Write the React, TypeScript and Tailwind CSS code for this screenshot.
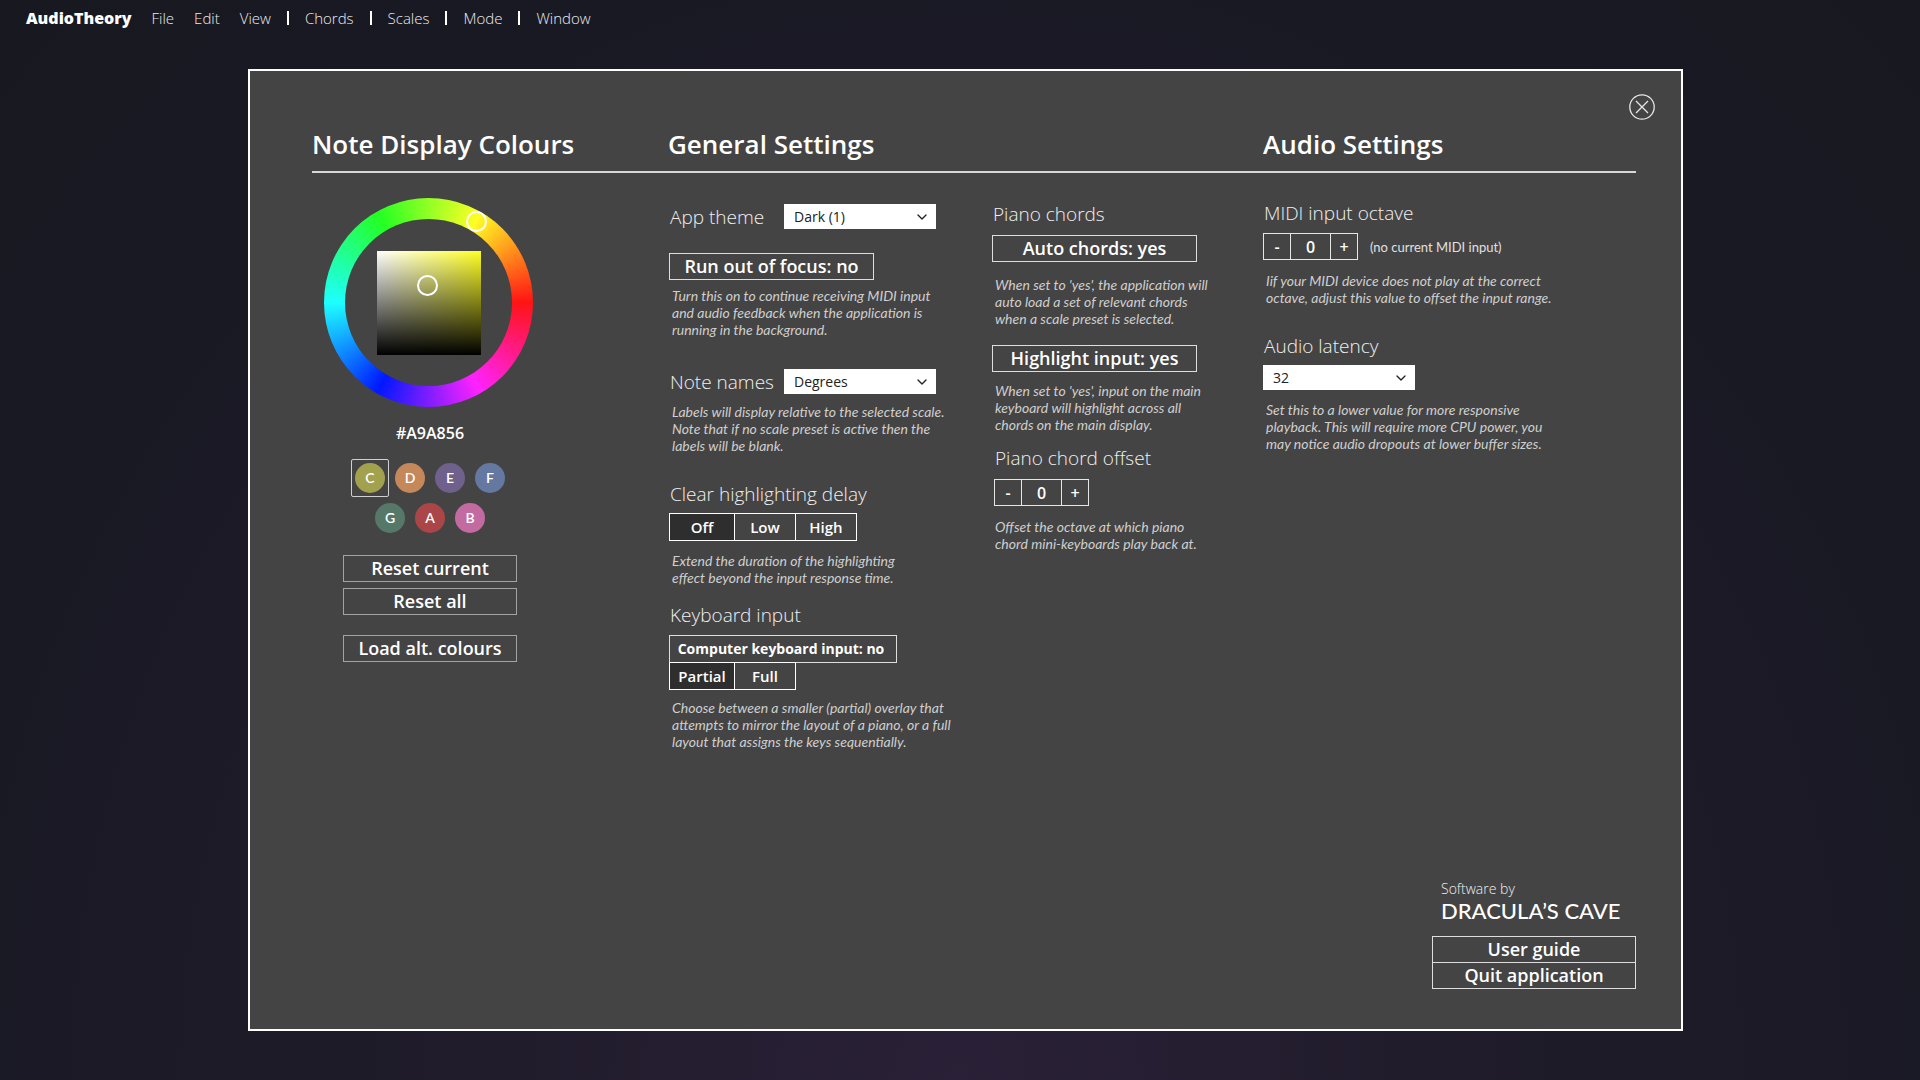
import { useState } from 'react'
import { ChevronDown } from 'lucide-react'

const menuGroups = [
  ['File', 'Edit', 'View'],
  ['Chords'],
  ['Scales'],
  ['Mode'],
  ['Window'],
]

const noteRows = [
  [
    { name: 'C', hex: '#A9A856', colour: 'bg-[#a2a14e]' },
    { name: 'D', hex: '#C88B5D', colour: 'bg-[#c4885b]' },
    { name: 'E', hex: '#71628E', colour: 'bg-[#6f618b]' },
    { name: 'F', hex: '#667AA6', colour: 'bg-[#6578a2]' },
  ],
  [
    { name: 'G', hex: '#567868', colour: 'bg-[#567868]' },
    { name: 'A', hex: '#AC4848', colour: 'bg-[#aa4647]' },
    { name: 'B', hex: '#C56CA2', colour: 'bg-[#c36ba1]' },
  ],
]

function OutlineButton({
  children,
  onClick,
  className = '',
}: {
  children: React.ReactNode
  onClick?: () => void
  className?: string
}) {
  return (
    <button
      type="button"
      onClick={onClick}
      className={`flex h-[27px] items-center justify-center border pb-0.5 text-lg leading-6 font-semibold whitespace-nowrap hover:bg-[#2e2e2e] ${className}`}
    >
      {children}
    </button>
  )
}

function Select({ id, options }: { id: string; options: string[] }) {
  return (
    <div className="relative w-[152px]">
      <select
        id={id}
        className="block h-[25px] w-full appearance-none bg-white pr-6 pl-2.5 text-sm font-medium text-[#222]"
      >
        {options.map((option) => (
          <option key={option}>{option}</option>
        ))}
      </select>
      <ChevronDown className="pointer-events-none absolute top-[5px] right-1.5 h-4 w-4 text-[#222]" />
    </div>
  )
}

function Segments({
  label,
  options,
  value,
  onChange,
}: {
  label: string
  options: string[]
  value: string
  onChange: (value: string) => void
}) {
  return (
    <div role="group" aria-label={label} className="flex">
      {options.map((option, i) => (
        <button
          key={option}
          type="button"
          aria-pressed={option === value}
          onClick={() => onChange(option)}
          className={`h-7 border border-white text-[15px] leading-6 font-semibold ${
            i === 0 ? 'w-[66px]' : '-ml-px w-[62px]'
          } ${option === value ? 'bg-[#2e2e2e]' : ''}`}
        >
          {option}
        </button>
      ))}
    </div>
  )
}

function Stepper({ id }: { id: string }) {
  const [value, setValue] = useState(0)

  return (
    <div className="flex h-[27px] w-[95px] border border-[#e6e6e6] text-base leading-6 font-semibold">
      <button type="button" aria-label="Decrease" onClick={() => setValue(value - 1)} className="w-[26px]">
        -
      </button>
      <input
        id={id}
        readOnly
        value={value}
        className="min-w-0 flex-1 border-x border-[#e6e6e6] text-center"
      />
      <button type="button" aria-label="Increase" onClick={() => setValue(value + 1)} className="w-[26px]">
        +
      </button>
    </div>
  )
}

function Help({ children, className = '' }: { children: React.ReactNode; className?: string }) {
  return (
    <p
      className={`pb-px pl-[3px] font-['Lato',sans-serif] text-sm leading-[17px] whitespace-pre-line text-[#cfcfcf] italic ${className}`}
    >
      {children}
    </p>
  )
}

const labelStyle = 'block pl-px text-[19px] leading-6 font-light text-[#f0f0f0]'

export default function App() {
  const [note, setNote] = useState(noteRows[0][0])
  const [runOutOfFocus, setRunOutOfFocus] = useState(false)
  const [delay, setDelay] = useState('Off')
  const [keyboardInput, setKeyboardInput] = useState(false)
  const [overlay, setOverlay] = useState('Partial')
  const [autoChords, setAutoChords] = useState(true)
  const [highlightInput, setHighlightInput] = useState(true)

  return (
    <div className="flex min-h-screen flex-col bg-[#181822] bg-[radial-gradient(ellipse_at_bottom,#2a2037_0%,#201c2b_35%,#191924_75%,#181820_100%)] font-['Open_Sans',sans-serif] text-white">
      {/* Menu bar */}
      <header className="flex h-[69px] items-start gap-5 pt-1.5 pl-[26px] text-[15px] leading-6">
        <h1 className="text-base leading-6 font-extrabold">AudioTheory</h1>
        <nav className="flex items-center gap-4 font-light text-[#ececec]">
          {menuGroups.map((group, i) => (
            <div key={group[0]} className="flex items-center gap-4">
              {i > 0 && <span className="h-3.5 w-0.5 bg-white" />}
              <div className="flex gap-5">
                {group.map((item) => (
                  <a key={item} href="#" className="hover:text-white">
                    {item}
                  </a>
                ))}
              </div>
            </div>
          ))}
        </nav>
      </header>

      {/* Settings window */}
      <main className="mr-[237px] mb-[49px] ml-[248px] flex flex-1 flex-col border-2 border-white bg-[#444]">
        <div className="flex justify-end pt-[23px] pr-[26px]">
          <button type="button" aria-label="Close settings">
            <svg viewBox="0 0 26 26" className="h-[26px] w-[26px]" fill="none" stroke="#e6e6e6" strokeWidth="1.3">
              <circle cx="13" cy="13" r="12.2" />
              <path d="M7 7l12 12M19 7L7 19" />
            </svg>
          </button>
        </div>

        <div className="flex flex-1 flex-col pr-[45px] pl-[62px]">
          <div className="mt-2 grid grid-cols-[356fr_595fr_373fr] border-b-2 border-[#d8d8d8] pb-[11px] text-[26px] leading-8 font-semibold">
            <h2>Note Display Colours</h2>
            <h2>General Settings</h2>
            <h2>Audio Settings</h2>
          </div>

          <div className="grid grid-cols-[357fr_323fr_271fr_373fr]">
            {/* Note colours */}
            <section className="flex w-[236px] flex-col items-center pt-[25px]">
              <div className="relative ml-3 flex h-[209px] w-[209px] items-center justify-center self-start rounded-full bg-[conic-gradient(from_90deg,#ff1414,#ff22ff_60deg,#0018ff_120deg,#1effff_180deg,#24ff24_240deg,#ffff24_300deg,#ff1414)]">
                <div className="flex h-[167px] w-[167px] items-center justify-center rounded-full bg-[#444]">
                  <div className="h-[104px] w-[104px] bg-[linear-gradient(to_top,#000,transparent),linear-gradient(to_right,#fff,#ffff24)]" />
                </div>
                <span className="absolute top-[13px] left-[142px] h-[21px] w-[21px] rounded-full border-2 border-white" />
                <span className="absolute top-[77px] left-[93px] h-[21px] w-[21px] rounded-full border-2 border-white" />
              </div>

              <output className="mt-3.5 text-base leading-6 font-semibold">{note.hex}</output>

              <div className="mt-3.5 flex flex-col items-center gap-0.5">
                {noteRows.map((row) => (
                  <div key={row[0].name} className="flex gap-0.5">
                    {row.map((item) => (
                      <button
                        key={item.name}
                        type="button"
                        aria-pressed={item.name === note.name}
                        onClick={() => setNote(item)}
                        className={`flex h-[38px] w-[38px] items-center justify-center rounded-xs border ${
                          item.name === note.name ? 'border-[#d0d0d0]' : 'border-transparent'
                        }`}
                      >
                        <span
                          className={`flex h-[30px] w-[30px] items-center justify-center rounded-full font-['Lato',sans-serif] text-sm font-semibold ${item.colour}`}
                        >
                          {item.name}
                        </span>
                      </button>
                    ))}
                  </div>
                ))}
              </div>

              <OutlineButton className="mt-[18px] w-[174px] border-[#a3a3a3]">Reset current</OutlineButton>
              <OutlineButton className="mt-1.5 w-[174px] border-[#a3a3a3]">Reset all</OutlineButton>
              <OutlineButton className="mt-5 w-[174px] border-[#a3a3a3]">Load alt. colours</OutlineButton>
            </section>

            {/* General */}
            <section className="pt-[31px]">
              <div className="flex items-center">
                <label htmlFor="theme" className={`w-[115px] ${labelStyle}`}>
                  App theme
                </label>
                <Select id="theme" options={['Dark (1)', 'Dark (2)', 'Light']} />
              </div>
              <OutlineButton
                className="mt-6 w-[205px] border-[#dedede]"
                onClick={() => setRunOutOfFocus(!runOutOfFocus)}
              >
                Run out of focus: {runOutOfFocus ? 'yes' : 'no'}
              </OutlineButton>
              <Help className="mt-[7px]">
                {'Turn this on to continue receiving MIDI input\nand audio feedback when the application is\nrunning in the background.'}
              </Help>

              <div className="mt-[30px] flex items-center">
                <label htmlFor="note-names" className={`w-[115px] ${labelStyle}`}>
                  Note names
                </label>
                <Select id="note-names" options={['Degrees', 'Letters', 'None']} />
              </div>
              <Help className="mt-[9px]">
                {'Labels will display relative to the selected scale.\nNote that if no scale preset is active then the\nlabels will be blank.'}
              </Help>

              <h3 className={`mt-[27px] mb-[7px] ${labelStyle}`}>Clear highlighting delay</h3>
              <Segments
                label="Clear highlighting delay"
                options={['Off', 'Low', 'High']}
                value={delay}
                onChange={setDelay}
              />
              <Help className="mt-[11px]">
                {'Extend the duration of the highlighting\neffect beyond the input response time.'}
              </Help>

              <h3 className={`mt-4 mb-2 ${labelStyle}`}>Keyboard input</h3>
              <button
                type="button"
                onClick={() => setKeyboardInput(!keyboardInput)}
                className="-mb-px block h-7 w-[228px] border border-[#dedede] pr-1 text-sm leading-6 font-bold whitespace-nowrap"
              >
                Computer keyboard input: {keyboardInput ? 'yes' : 'no'}
              </button>
              <Segments label="Keyboard layout" options={['Partial', 'Full']} value={overlay} onChange={setOverlay} />
              <Help className="mt-[9px]">
                {'Choose between a smaller (partial) overlay that\nattempts to mirror the layout of a piano, or a full\nlayout that assigns the keys sequentially.'}
              </Help>
            </section>

            {/* Piano chords */}
            <section className="pt-[29px]">
              <h3 className={labelStyle}>Piano chords</h3>
              <OutlineButton className="mt-[9px] w-[205px] border-[#dedede]" onClick={() => setAutoChords(!autoChords)}>
                Auto chords: {autoChords ? 'yes' : 'no'}
              </OutlineButton>
              <Help className="mt-3.5">
                {"When set to 'yes', the application will\nauto load a set of relevant chords\nwhen a scale preset is selected."}
              </Help>
              <OutlineButton
                className="mt-[17px] w-[205px] border-[#dedede]"
                onClick={() => setHighlightInput(!highlightInput)}
              >
                Highlight input: {highlightInput ? 'yes' : 'no'}
              </OutlineButton>
              <Help className="mt-2.5">
                {"When set to 'yes', input on the main\nkeyboard will highlight across all\nchords on the main display."}
              </Help>
              <div className="mt-3 pl-0.5">
                <label htmlFor="chord-offset" className={`mb-[9px] ${labelStyle}`}>
                  Piano chord offset
                </label>
                <Stepper id="chord-offset" />
              </div>
              <Help className="mt-3">
                {'Offset the octave at which piano\nchord mini-keyboards play back at.'}
              </Help>
            </section>

            {/* Audio */}
            <section className="pt-7">
              <label htmlFor="midi-octave" className={labelStyle}>
                MIDI input octave
              </label>
              <div className="mt-2 flex items-center gap-3">
                <Stepper id="midi-octave" />
                <span className="font-['Lato',sans-serif] text-[13px] leading-5 text-[#e0e0e0]">
                  (no current MIDI input)
                </span>
              </div>
              <Help className="mt-3">
                {'Iif your MIDI device does not play at the correct\noctave, adjust this value to offset the input range.'}
              </Help>
              <label htmlFor="latency" className={`mt-[27px] mb-[7px] ${labelStyle}`}>
                Audio latency
              </label>
              <Select id="latency" options={['32', '64', '128', '256']} />
              <Help className="mt-[11px]">
                {'Set this to a lower value for more responsive\nplayback. This will require more CPU power, you\nmay notice audio dropouts at lower buffer sizes.'}
              </Help>
            </section>
          </div>

          {/* Credits */}
          <footer className="mt-auto mb-10 w-[204px] self-end">
            <p className="pl-[9px] text-sm leading-5 font-light text-[#f0f0f0]">Software by</p>
            <p className="pl-[9px] font-['Lato',sans-serif] text-[22px] leading-6 font-medium">DRACULA’S CAVE</p>
            <OutlineButton className="mt-[13px] w-full border-[#dedede]">User guide</OutlineButton>
            <OutlineButton className="-mt-px w-full border-[#dedede]">Quit application</OutlineButton>
          </footer>
        </div>
      </main>
    </div>
  )
}
